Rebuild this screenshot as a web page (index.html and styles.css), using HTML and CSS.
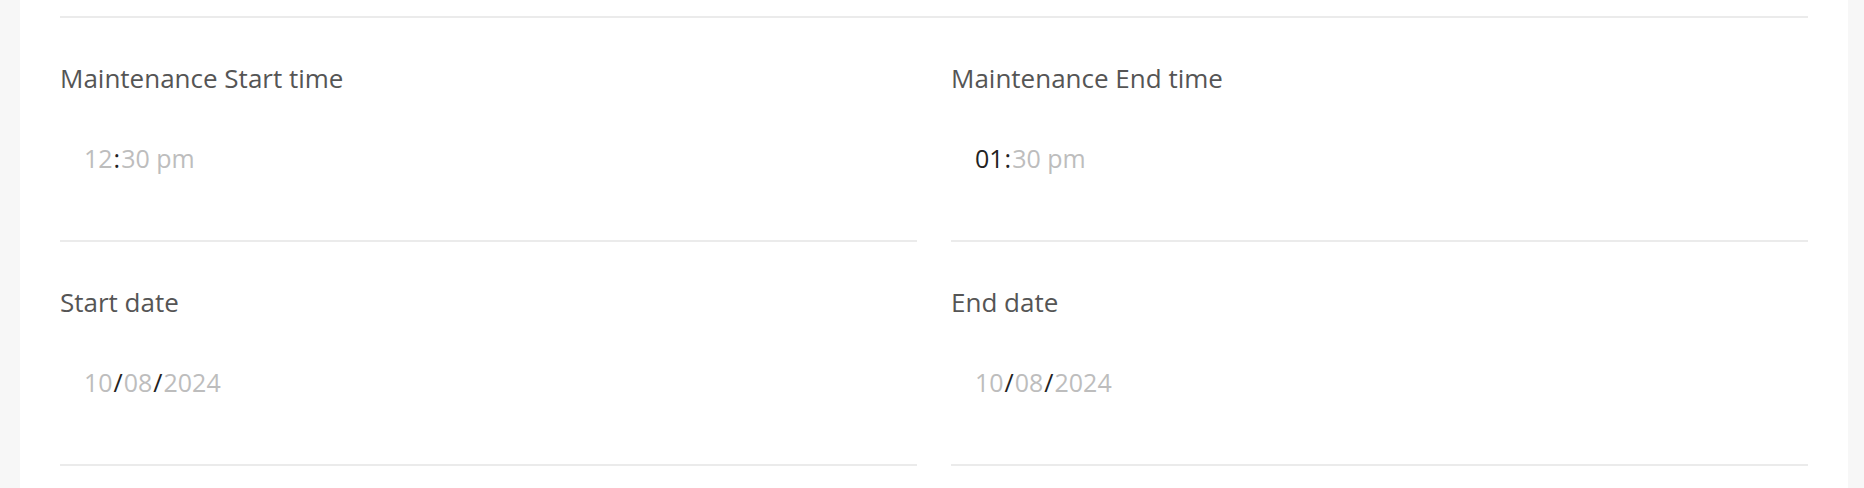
FILE: index.html
```html
<!DOCTYPE html>
<html>

<head>
    <meta charset="utf-8">
    <title>Maintenance window</title>
    <meta name="viewport" content="width=device-width, initial-scale=1">
    <link rel="stylesheet" href="styles.css">
</head>

<body>
    <div class="card">
        <div class="divider"></div>
        <div class="form-grid">
            <div class="field">
                <label class="field-label">Maintenance Start time</label>
                <div class="field-value">
                    <span class="seg">12</span><span class="sep">:</span><span class="seg">30</span> <span class="seg">pm</span>
                </div>
            </div>
            <div class="field">
                <label class="field-label">Maintenance End time</label>
                <div class="field-value">
                    <span class="seg active">01</span><span class="sep">:</span><span class="seg">30</span> <span class="seg">pm</span>
                </div>
            </div>
            <div class="field">
                <label class="field-label">Start date</label>
                <div class="field-value">
                    <span class="seg">10</span><span class="sep">/</span><span class="seg">08</span><span class="sep">/</span><span class="seg">2024</span>
                </div>
            </div>
            <div class="field">
                <label class="field-label">End date</label>
                <div class="field-value">
                    <span class="seg">10</span><span class="sep">/</span><span class="seg">08</span><span class="sep">/</span><span class="seg">2024</span>
                </div>
            </div>
        </div>
    </div>
</body>

</html>
```

FILE: styles.css
```css
* {
    margin: 0;
    padding: 0;
    box-sizing: border-box;
}

body {
    background: #f7f7f7;
    font-family: "Open Sans", "DejaVu Sans", sans-serif;
    height: 488px;
    overflow: hidden;
}

.card {
    background: #fff;
    margin: 0 16px 0 20px;
    padding: 16px 40px 0;
    height: 100%;
}

.divider {
    border-top: 2px solid #ebebeb;
}

.form-grid {
    display: grid;
    grid-template-columns: 1fr 1fr;
    column-gap: 34px;
}

.field {
    padding-top: 42px;
    border-bottom: 2px solid #ebebeb;
}

.field-label {
    display: block;
    font-size: 26px;
    line-height: 36px;
    color: #555;
}

.field-value {
    padding: 44px 24px 64px;
    font-size: 25px;
    line-height: 36px;
    color: #bdbdbd;
}

.field-value .sep {
    color: #222;
    margin: 0 1px;
}

.field-value .active {
    color: #222;
}
```
